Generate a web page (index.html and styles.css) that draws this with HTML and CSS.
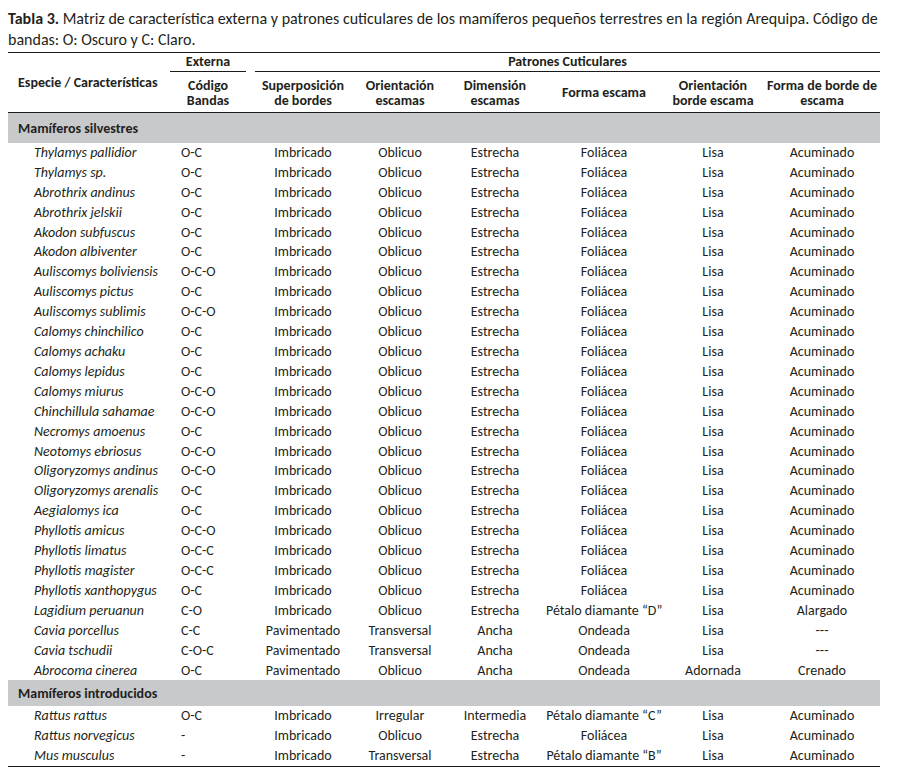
FILE: index.html
```html
<!DOCTYPE html>
<html lang="es">
<head>
<meta charset="utf-8">
<title>Tabla 3</title>
<link rel="stylesheet" href="styles.css">
</head>
<body>
<div class="wrap">
<p class="caption"><b>Tabla 3.</b> Matriz de característica externa y patrones cuticulares de los mamíferos pequeños terrestres en la región Arequipa. Código de bandas: O: Oscuro y C: Claro.</p>
<table class="tbl">
<colgroup>
<col class="c1"><col class="c2"><col class="c3"><col class="c4"><col class="c5"><col class="c6"><col class="c7"><col class="c8">
</colgroup>
<thead>
<tr class="h1">
<th rowspan="2" class="sp-h">Especie / Características</th>
<th class="grp"><div class="ul ul-ext">Externa</div></th>
<th colspan="6" class="grp"><div class="ul ul-pat">Patrones Cuticulares</div></th>
</tr>
<tr class="h2">
<th>Código<br>Bandas</th>
<th>Superposición<br>de bordes</th>
<th>Orientación<br>escamas</th>
<th>Dimensión<br>escamas</th>
<th>Forma escama</th>
<th>Orientación<br>borde escama</th>
<th>Forma de borde de<br>escama</th>
</tr>
</thead>
<tbody>
<tr class="band band1"><td colspan="8">Mamíferos silvestres</td></tr>
<tr><td>Thylamys pallidior</td><td>O-C</td><td>Imbricado</td><td>Oblicuo</td><td>Estrecha</td><td>Foliácea</td><td>Lisa</td><td>Acuminado</td></tr>
<tr><td>Thylamys sp.</td><td>O-C</td><td>Imbricado</td><td>Oblicuo</td><td>Estrecha</td><td>Foliácea</td><td>Lisa</td><td>Acuminado</td></tr>
<tr><td>Abrothrix andinus</td><td>O-C</td><td>Imbricado</td><td>Oblicuo</td><td>Estrecha</td><td>Foliácea</td><td>Lisa</td><td>Acuminado</td></tr>
<tr><td>Abrothrix jelskii</td><td>O-C</td><td>Imbricado</td><td>Oblicuo</td><td>Estrecha</td><td>Foliácea</td><td>Lisa</td><td>Acuminado</td></tr>
<tr><td>Akodon subfuscus</td><td>O-C</td><td>Imbricado</td><td>Oblicuo</td><td>Estrecha</td><td>Foliácea</td><td>Lisa</td><td>Acuminado</td></tr>
<tr><td>Akodon albiventer</td><td>O-C</td><td>Imbricado</td><td>Oblicuo</td><td>Estrecha</td><td>Foliácea</td><td>Lisa</td><td>Acuminado</td></tr>
<tr><td>Auliscomys boliviensis</td><td>O-C-O</td><td>Imbricado</td><td>Oblicuo</td><td>Estrecha</td><td>Foliácea</td><td>Lisa</td><td>Acuminado</td></tr>
<tr><td>Auliscomys pictus</td><td>O-C</td><td>Imbricado</td><td>Oblicuo</td><td>Estrecha</td><td>Foliácea</td><td>Lisa</td><td>Acuminado</td></tr>
<tr><td>Auliscomys sublimis</td><td>O-C-O</td><td>Imbricado</td><td>Oblicuo</td><td>Estrecha</td><td>Foliácea</td><td>Lisa</td><td>Acuminado</td></tr>
<tr><td>Calomys chinchilico</td><td>O-C</td><td>Imbricado</td><td>Oblicuo</td><td>Estrecha</td><td>Foliácea</td><td>Lisa</td><td>Acuminado</td></tr>
<tr><td>Calomys achaku</td><td>O-C</td><td>Imbricado</td><td>Oblicuo</td><td>Estrecha</td><td>Foliácea</td><td>Lisa</td><td>Acuminado</td></tr>
<tr><td>Calomys lepidus</td><td>O-C</td><td>Imbricado</td><td>Oblicuo</td><td>Estrecha</td><td>Foliácea</td><td>Lisa</td><td>Acuminado</td></tr>
<tr><td>Calomys miurus</td><td>O-C-O</td><td>Imbricado</td><td>Oblicuo</td><td>Estrecha</td><td>Foliácea</td><td>Lisa</td><td>Acuminado</td></tr>
<tr><td>Chinchillula sahamae</td><td>O-C-O</td><td>Imbricado</td><td>Oblicuo</td><td>Estrecha</td><td>Foliácea</td><td>Lisa</td><td>Acuminado</td></tr>
<tr><td>Necromys amoenus</td><td>O-C</td><td>Imbricado</td><td>Oblicuo</td><td>Estrecha</td><td>Foliácea</td><td>Lisa</td><td>Acuminado</td></tr>
<tr><td>Neotomys ebriosus</td><td>O-C-O</td><td>Imbricado</td><td>Oblicuo</td><td>Estrecha</td><td>Foliácea</td><td>Lisa</td><td>Acuminado</td></tr>
<tr><td>Oligoryzomys andinus</td><td>O-C-O</td><td>Imbricado</td><td>Oblicuo</td><td>Estrecha</td><td>Foliácea</td><td>Lisa</td><td>Acuminado</td></tr>
<tr><td>Oligoryzomys arenalis</td><td>O-C</td><td>Imbricado</td><td>Oblicuo</td><td>Estrecha</td><td>Foliácea</td><td>Lisa</td><td>Acuminado</td></tr>
<tr><td>Aegialomys ica</td><td>O-C</td><td>Imbricado</td><td>Oblicuo</td><td>Estrecha</td><td>Foliácea</td><td>Lisa</td><td>Acuminado</td></tr>
<tr><td>Phyllotis amicus</td><td>O-C-O</td><td>Imbricado</td><td>Oblicuo</td><td>Estrecha</td><td>Foliácea</td><td>Lisa</td><td>Acuminado</td></tr>
<tr><td>Phyllotis limatus</td><td>O-C-C</td><td>Imbricado</td><td>Oblicuo</td><td>Estrecha</td><td>Foliácea</td><td>Lisa</td><td>Acuminado</td></tr>
<tr><td>Phyllotis magister</td><td>O-C-C</td><td>Imbricado</td><td>Oblicuo</td><td>Estrecha</td><td>Foliácea</td><td>Lisa</td><td>Acuminado</td></tr>
<tr><td>Phyllotis xanthopygus</td><td>O-C</td><td>Imbricado</td><td>Oblicuo</td><td>Estrecha</td><td>Foliácea</td><td>Lisa</td><td>Acuminado</td></tr>
<tr><td>Lagidium peruanun</td><td>C-O</td><td>Imbricado</td><td>Oblicuo</td><td>Estrecha</td><td>Pétalo diamante “D”</td><td>Lisa</td><td>Alargado</td></tr>
<tr><td>Cavia porcellus</td><td>C-C</td><td>Pavimentado</td><td>Transversal</td><td>Ancha</td><td>Ondeada</td><td>Lisa</td><td>---</td></tr>
<tr><td>Cavia tschudii</td><td>C-O-C</td><td>Pavimentado</td><td>Transversal</td><td>Ancha</td><td>Ondeada</td><td>Lisa</td><td>---</td></tr>
<tr><td>Abrocoma cinerea</td><td>O-C</td><td>Pavimentado</td><td>Oblicuo</td><td>Ancha</td><td>Ondeada</td><td>Adornada</td><td>Crenado</td></tr>
<tr class="band band2"><td colspan="8">Mamíferos introducidos</td></tr>
<tr><td>Rattus rattus</td><td>O-C</td><td>Imbricado</td><td>Irregular</td><td>Intermedia</td><td>Pétalo diamante “C”</td><td>Lisa</td><td>Acuminado</td></tr>
<tr><td>Rattus norvegicus</td><td>-</td><td>Imbricado</td><td>Oblicuo</td><td>Estrecha</td><td>Foliácea</td><td>Lisa</td><td>Acuminado</td></tr>
<tr class="last"><td>Mus musculus</td><td>-</td><td>Imbricado</td><td>Transversal</td><td>Estrecha</td><td>Pétalo diamante “B”</td><td>Lisa</td><td>Acuminado</td></tr>
</tbody>
</table>
</div>
</body>
</html>
```

FILE: styles.css
```css
html, body {
  margin: 0;
  padding: 0;
  background: #ffffff;
}
body {
  padding: 8px;
  font-family: Carlito, Lato, "Open Sans", "Liberation Sans", sans-serif;
  color: #231f20;
}
.wrap {
  width: 872px;
}
.caption {
  margin: 0;
  font-size: 16px;
  line-height: 21px;
  height: 44px;
}
.caption b {
  font-weight: 700;
}
.tbl {
  width: 872px;
  border-collapse: collapse;
  table-layout: fixed;
  font-size: 14px;
  border-top: 1px solid #1a1a1a;
  border-bottom: 1px solid #1a1a1a;
}
.c1 { width: 158px; }
.c2 { width: 84px; }
.c3 { width: 106px; }
.c4 { width: 88px; }
.c5 { width: 102px; }
.c6 { width: 116px; }
.c7 { width: 102px; }
.c8 { width: 116px; }

.tbl th {
  font-weight: 700;
  padding: 0;
  text-align: center;
  vertical-align: middle;
  line-height: 15px;
  white-space: nowrap;
}
.tbl thead tr.h1 th.grp {
  height: 19px;
  vertical-align: bottom;
}
.ul {
  border-bottom: 1px solid #1a1a1a;
  padding-bottom: 2px;
}
.ul-ext {
  margin: 0 4px;
}
.ul-pat {
  margin-left: 5px;
}
.tbl thead tr.h2 th {
  height: 39px;
  border-bottom: 1px solid #1a1a1a;
  padding-top: 1px;
}
.tbl th.sp-h {
  text-align: left;
  padding-left: 10px;
  border-bottom: 1px solid #1a1a1a;
  vertical-align: middle;
}
.band td {
  background: #c8c9cb;
  font-weight: 700;
  text-align: left;
  padding-left: 10px;
  font-size: 14px;
}
.band1 td { height: 28px; }
.band2 td { height: 24px; }

.tbl tbody tr:not(.band) td {
  height: 19.92px;
  padding: 0;
  text-align: center;
  line-height: 16px;
  white-space: nowrap;
}
.tbl tbody tr:not(.band) td:first-child {
  text-align: left;
  padding-left: 26px;
  font-style: italic;
}
.tbl tbody tr:not(.band) td:nth-child(2) {
  text-align: left;
  padding-left: 15px;
}
```
